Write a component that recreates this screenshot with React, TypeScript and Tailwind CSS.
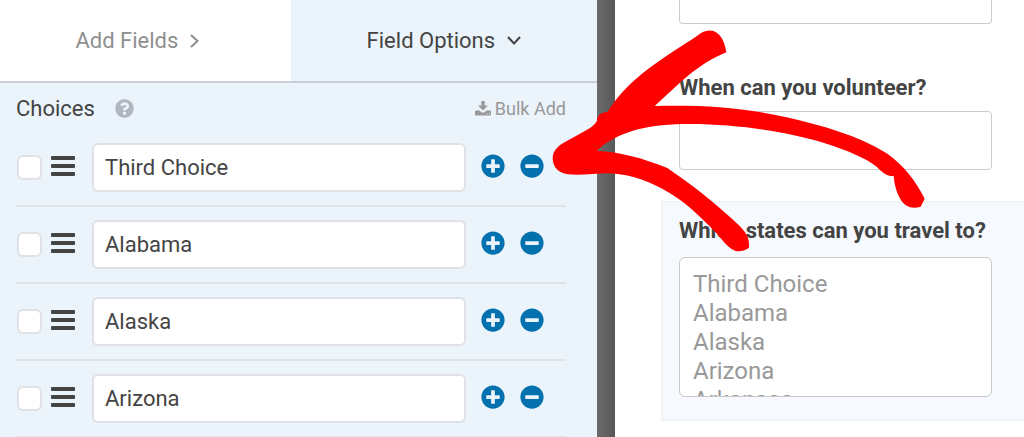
import React, { useState } from "react";
import { FaPlusCircle, FaMinusCircle, FaQuestionCircle } from "react-icons/fa";

const states = ["Third Choice", "Alabama", "Alaska", "Arizona"];
const previewOptions = [...states, "Arkansas", "California"];

function DownloadIcon() {
  return (
    <svg viewBox="0 0 16 15" className="h-[15px] w-4" fill="currentColor" aria-hidden="true">
      <path d="M6.300 0h3.400v4.500h3.300L8 9.400 3 4.500h3.300z" />
      <path
        fillRule="evenodd"
        d="M1 9.500h3.500l1.700 1.600q1.800 1.400 3.600 0l1.700-1.600H15q1 0 1 1v3q0 1-1 1H1q-1 0-1-1v-3q0-1 1-1zm10.700 2.800v.9h.9v-.9zm2.100 0v.9h.9v-.9z"
      />
    </svg>
  );
}

function Arrow() {
  return (
    <svg
      viewBox="36 27 1122 669"
      className="pointer-events-none absolute top-[29px] -left-[45px] h-[223px] w-[374px]"
      fill="#ff0000"
      aria-hidden="true"
    >
      <path d="M38 415C38 395 50 380 75 366L120 341C150 325 165 315 171 302C170 288 182 277 202 276C240 215 290 170 350 128C400 93 440 70 482 40C515 20 550 35 559 97C500 120 450 160 405 202L344 258C480 255 600 260 740 292C850 318 950 345 1040 400C1090 435 1125 480 1154 536L1142 560C1120 567 1095 565 1078 532C1067 510 1063 490 1061 468C1040 470 1025 455 1010 440C980 415 920 390 850 368C750 338 600 312 450 312C330 312 240 330 170 392C240 395 310 415 382 444C450 490 520 545 580 600C610 628 630 645 627 683C615 692 600 696 585 692C560 682 545 655 525 635C480 590 440 550 390 520C340 490 280 462 205 460C165 460 120 467 85 463C60 460 38 445 38 415Z" />
    </svg>
  );
}

function ChoiceRow({ name }: { name: string }) {
  const [value, setValue] = useState(name);

  return (
    <li className="flex h-[77px] items-center border-b-2 border-[#e1e3e9] pr-[22px]">
      <input
        type="checkbox"
        aria-label={`Select ${name} by default`}
        className="mr-[9px] ml-px size-[25px] shrink-0 appearance-none rounded-md border-2 border-[#dfe1e5] bg-white checked:bg-[#0371ad]"
      />
      <button type="button" aria-label={`Move ${name}`} className="mr-4 mb-1 shrink-0 text-[#444]">
        <svg viewBox="0 0 25 20" className="h-5 w-[25px]" fill="currentColor">
          <rect y="0" width="24" height="4" rx="1" />
          <rect y="8" width="24" height="4" rx="1" />
          <rect y="16" width="24" height="4" rx="1" />
        </svg>
      </button>
      <input
        type="text"
        aria-label="Choice label"
        value={value}
        onChange={(e) => setValue(e.target.value)}
        className="mr-[15px] h-[49px] min-w-0 flex-1 rounded-md border-2 border-[#dfe1e5] bg-white px-[11px] text-[22px] text-[#444]"
      />
      <button type="button" aria-label="Add choice" className="mr-[15px] mb-1 shrink-0 text-[#0371ad]">
        <FaPlusCircle className="size-6" />
      </button>
      <button
        type="button"
        aria-label="Remove choice"
        className="mb-1 shrink-0 text-[#0371ad] hover:text-[#02639a]"
      >
        <FaMinusCircle className="size-6" />
      </button>
    </li>
  );
}

export default function App() {
  return (
    <main className="flex min-h-screen bg-white font-['Roboto',sans-serif] text-[#444]">
      <section className="w-[58.3%] shrink-0 bg-[#ebf3fb]">
        <nav className="flex h-[83px] border-b-2 border-[#c9cfd8] text-[22px]">
          <button
            type="button"
            className="flex w-[48.7%] items-center justify-center gap-3 bg-white pr-4 text-[#8f8f8f]"
          >
            Add Fields
            <svg viewBox="0 0 9 14" className="h-3.5 w-[9px]" fill="none" stroke="currentColor" strokeWidth="2">
              <path d="M1 1l6.500 6L1 13" />
            </svg>
          </button>
          <button type="button" className="flex flex-1 items-center justify-center gap-3">
            Field Options
            <svg viewBox="0 0 14 9" className="h-[9px] w-3.5" fill="none" stroke="currentColor" strokeWidth="2">
              <path d="M1 1l6 6.500L13 1" />
            </svg>
          </button>
        </nav>

        <div className="pr-[31px] pl-4">
          <div className="flex h-[47px] items-center pt-1">
            <h2 className="text-[22px]">Choices</h2>
            <button type="button" aria-label="Help" className="ml-5 text-[#b1b5bd]">
              <FaQuestionCircle className="size-[19px]" />
            </button>
            <button type="button" className="ml-auto flex items-center gap-1 text-lg text-[#999]">
              <DownloadIcon />
              Bulk Add
            </button>
          </div>
          <ul>
            {states.map((state) => (
              <ChoiceRow key={state} name={state} />
            ))}
          </ul>
        </div>
      </section>

      <section className="relative flex min-w-0 flex-1">
        <div className="w-[18px] shrink-0 bg-linear-to-r from-[#6b6b6b] to-[#585858]" />
        <form className="min-w-0 flex-1 pl-[46px]">
          <div className="pr-8 pl-[18px]">
            <input
              type="text"
              aria-label="Previous field"
              className="block h-6 w-full rounded-b border border-t-0 border-[#ccc] bg-white px-3"
            />
            <label htmlFor="volunteer" className="mt-12 block text-[22px] leading-8 font-bold">
              When can you volunteer?
            </label>
            <input
              id="volunteer"
              type="text"
              className="mt-[7px] block h-[59px] w-full rounded border border-[#ccc] bg-white px-3"
            />
          </div>

          <div className="mt-[31px] border-2 border-r-0 border-[#f0f2f4] bg-[#f6f9fd] pt-3 pr-8 pb-[22px] pl-4">
            <label htmlFor="travel" className="block text-[22px] leading-8 font-bold">
              Which states can you travel to?
            </label>
            <select
              id="travel"
              multiple
              className="mt-[10px] block h-[140px] w-full overflow-hidden rounded-md border border-[#c8c8c8] bg-white px-[13px] py-3 text-2xl text-[#999]"
            >
              {previewOptions.map((option) => (
                <option key={option} className="h-[29px] p-0 text-2xl leading-[29px]">
                  {option}
                </option>
              ))}
            </select>
          </div>
        </form>
        <Arrow />
      </section>
    </main>
  );
}
